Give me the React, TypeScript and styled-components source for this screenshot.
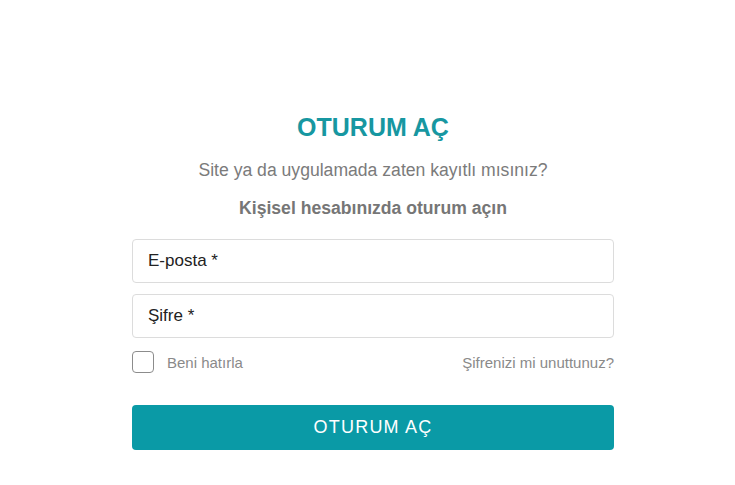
import React from "react";
import styled, { createGlobalStyle } from "styled-components";

const Global = createGlobalStyle`
  html, body { margin: 0; padding: 0; background: #fff; }
  body { font-family: "Liberation Sans", Arial, sans-serif; }
  * { box-sizing: border-box; }
`;

const Page = styled.main`
  padding: 113px 0 0 132px;
`;

const Card = styled.form`
  width: 482px;
  display: flex;
  flex-direction: column;
`;

const Title = styled.h1`
  margin: 0;
  font-size: 25px;
  line-height: 28px;
  font-weight: 700;
  color: #1797a1;
  text-align: center;
`;

const Subtitle = styled.p<{ $bold?: boolean; $top: number }>`
  margin: ${(p) => p.$top}px 0 0;
  font-size: 17.6px;
  line-height: 20px;
  font-weight: ${(p) => (p.$bold ? 700 : 400)};
  color: ${(p) => (p.$bold ? "#767676" : "#7b7b7b")};
  text-align: center;
`;

const Field = styled.input<{ $top: number }>`
  margin-top: ${(p) => p.$top}px;
  height: 44px;
  width: 100%;
  border: 1px solid #dcdcdc;
  border-radius: 4px;
  padding: 0 15px;
  font-family: "Liberation Sans", Arial, sans-serif;
  font-size: 17px;
  color: #222;
  outline: none;
  &::placeholder { color: #222; opacity: 1; }
`;

const OptionsRow = styled.div`
  margin-top: 13px;
  height: 22px;
  display: flex;
  align-items: center;
  justify-content: space-between;
`;

const Remember = styled.label`
  display: flex;
  align-items: center;
  gap: 13px;
  font-size: 15px;
  color: #8a8a8a;
`;

const Box = styled.span`
  width: 22px;
  height: 22px;
  border: 1px solid #8c8c8c;
  border-radius: 4px;
  display: inline-block;
`;

const Forgot = styled.a`
  font-size: 15px;
  color: #8a8a8a;
  text-decoration: none;
`;

const Submit = styled.button`
  margin-top: 32px;
  height: 45px;
  width: 100%;
  border: none;
  border-radius: 4px;
  background: #0a9aa6;
  color: #fff;
  font-family: "Liberation Sans", Arial, sans-serif;
  font-size: 18px;
  letter-spacing: 1.2px;
  cursor: pointer;
`;

export default function App() {
  return (
    <>
      <Global />
      <Page>
        <Card onSubmit={(e) => e.preventDefault()}>
          <Title>OTURUM AÇ</Title>
          <Subtitle $top={19}>Site ya da uygulamada zaten kayıtlı mısınız?</Subtitle>
          <Subtitle $top={18} $bold>
            Kişisel hesabınızda oturum açın
          </Subtitle>
          <Field $top={21} placeholder="E-posta *" />
          <Field $top={11} type="password" placeholder="Şifre *" />
          <OptionsRow>
            <Remember>
              <Box />
              Beni hatırla
            </Remember>
            <Forgot href="#">Şifrenizi mi unuttunuz?</Forgot>
          </OptionsRow>
          <Submit type="submit">OTURUM AÇ</Submit>
        </Card>
      </Page>
    </>
  );
}
